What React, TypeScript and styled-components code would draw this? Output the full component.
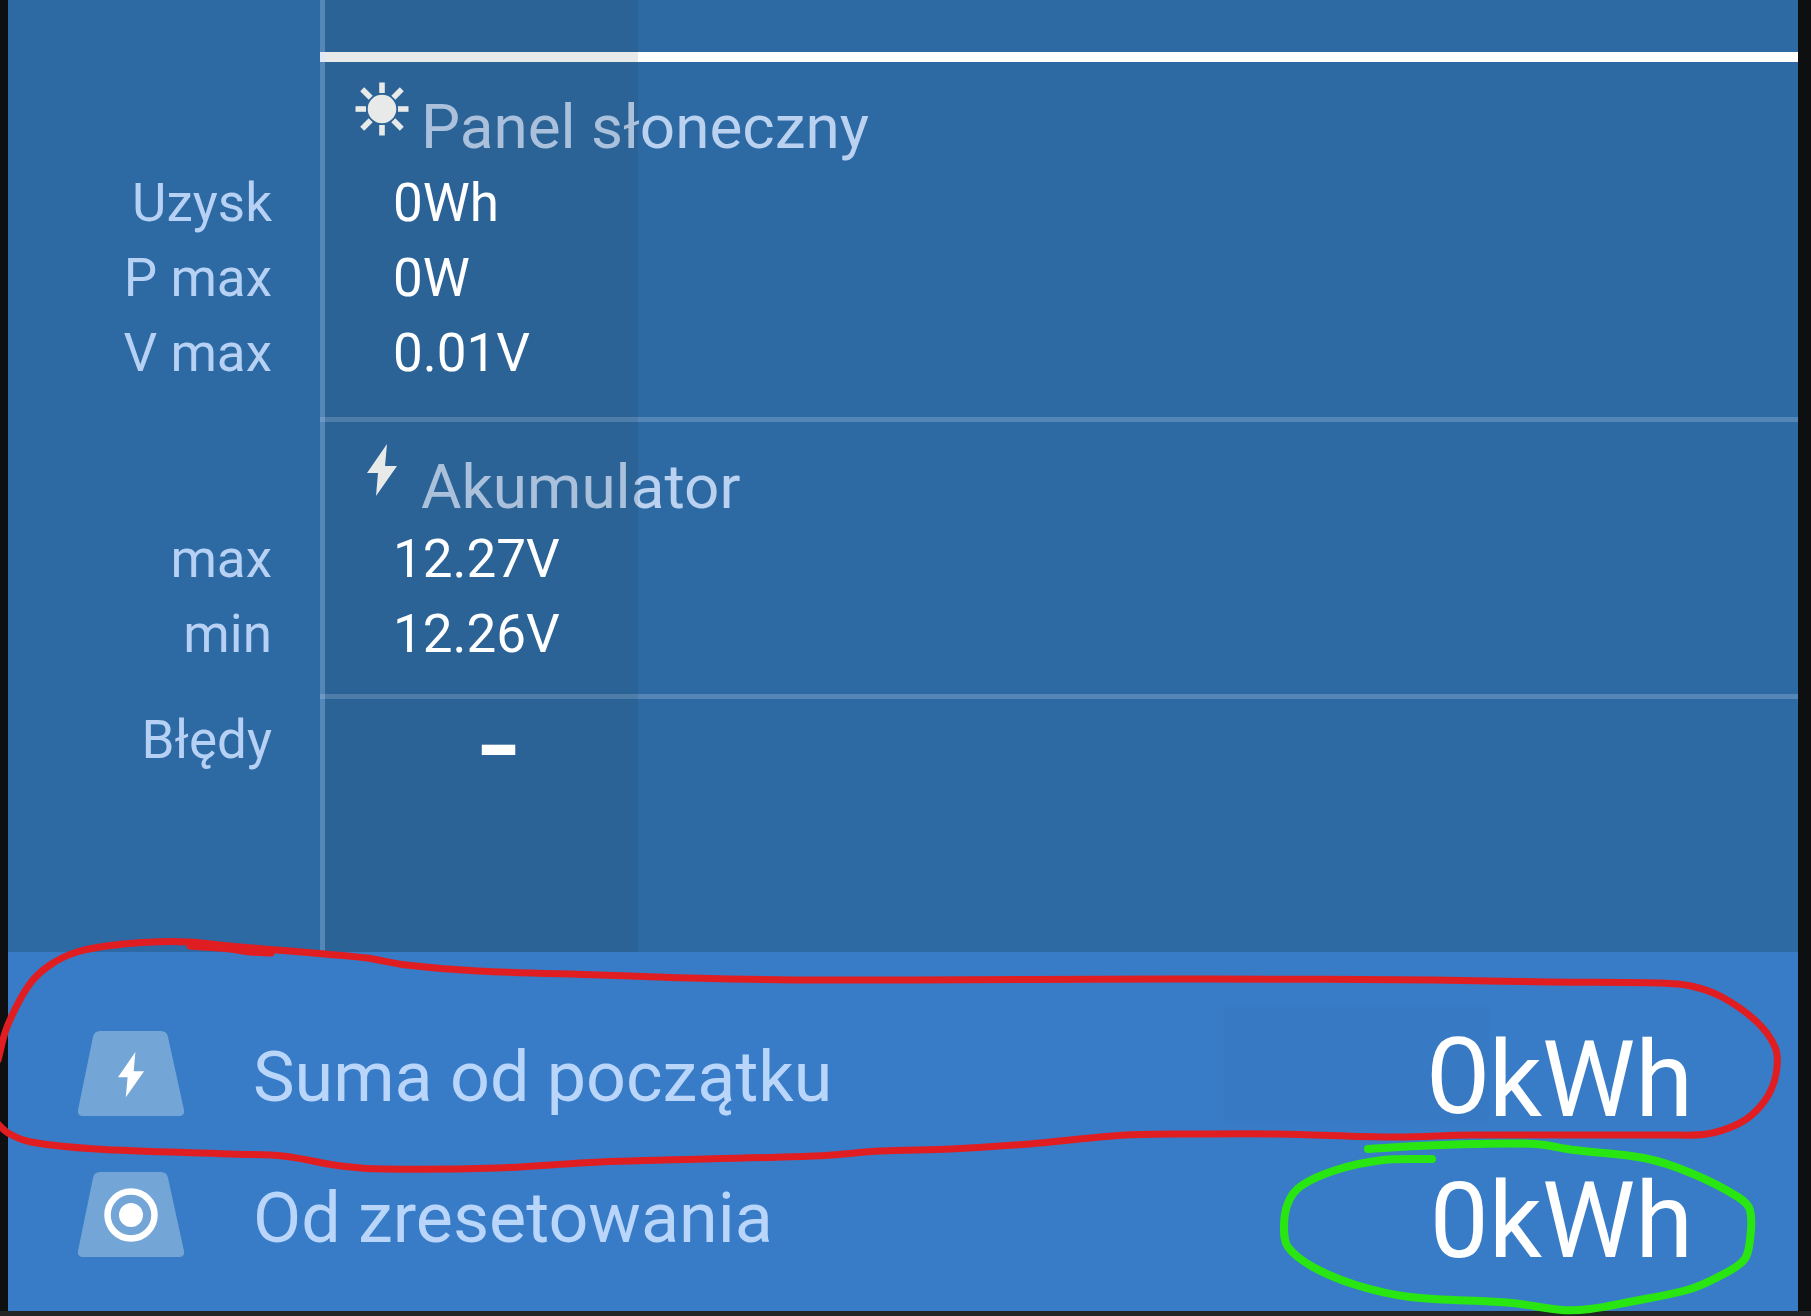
import React from "react";
import styled, { createGlobalStyle } from "styled-components";

const GlobalStyle = createGlobalStyle`
  * { box-sizing: border-box; }
  body { margin: 0; background: #0e0f10; }
`;

const LINE = "rgba(160, 190, 225, 0.34)";

const Page = styled.main`
  position: relative;
  display: flex;
  flex-direction: column;
  min-height: 100vh;
  padding: 0 13px 5px 8px;
  background: linear-gradient(to top, #222426 5px, #0e0f10 5px);
  font-family: Roboto, "Liberation Sans", sans-serif;
  color: #ffffff;
  overflow: hidden;
`;

const History = styled.section`
  position: relative;
  flex: 1;
  background: #2d69a3;
`;

const SelectedDay = styled.div`
  position: absolute;
  top: 0;
  bottom: 0;
  left: 312px;
  width: 318px;
  border-left: 5px solid ${LINE};
  background: rgba(28, 45, 40, 0.1);
  background-clip: padding-box;
`;

const Divider = styled.hr<{ $strong?: boolean }>`
  height: ${(p) => (p.$strong ? 10 : 5)}px;
  margin: 0 0 0 312px;
  border: 0;
  background: ${(p) => (p.$strong ? "#ffffff" : LINE)};
`;

const PreviousGroup = styled.div`
  height: 52px;
`;

const Group = styled.div<{ $bottom?: number }>`
  padding-bottom: ${(p) => p.$bottom ?? 0}px;
`;

const GroupTitle = styled.h2`
  display: flex;
  align-items: flex-start;
  height: 100px;
  margin: 0 0 0 312px;
  padding: 16px 0 0 30px;
  color: #bad1f0;
  font-size: 62px;
  font-weight: 400;
  line-height: 74px;

  svg {
    flex: none;
    width: 64px;
    height: 64px;
    margin-right: 7px;
  }

  span {
    padding-top: 12px;
  }
`;

const Readings = styled.dl<{ $top?: number }>`
  margin: 0;
  padding-top: ${(p) => p.$top ?? 0}px;
`;

const Reading = styled.div`
  display: grid;
  grid-template-columns: 312px 1fr;
  font-size: 53px;
  line-height: 75px;
`;

const Name = styled.dt`
  padding-right: 48px;
  text-align: right;
  color: #b6d1f4;
`;

const Amount = styled.dd`
  position: relative;
  z-index: 1;
  margin: 0;
  padding-left: 73px;
`;

const NoErrors = styled(Amount)`
  width: 318px;
  padding: 4px 0 0 39px;
  text-align: center;
  font-size: 140px;
`;

const Totals = styled.section`
  padding: 51px 105px 26px 70px;
  background: #387cc7;
`;

const Total = styled.div`
  display: grid;
  grid-template-columns: 106px 1fr auto;
  column-gap: 69px;
  align-items: center;
  height: 141px;
`;

const TotalName = styled.span`
  padding-top: 6px;
  color: #b9d6fa;
  font-size: 70px;
  line-height: 80px;
`;

const TotalAmount = styled.span`
  display: flex;
  align-items: center;
  height: 141px;
  font-size: 105px;
  line-height: 123px;
`;

const Digits = styled.span`
  padding-top: 14px;
`;

const EditedDigits = styled.span`
  align-self: flex-start;
  height: 116px;
  margin-top: 4px;
  padding: 20px 0 0 204px;
  background: #3779c2;
  font-family: "Liberation Sans", sans-serif;
  font-size: 110px;
  line-height: 96px;
`;

const Badge = styled.svg`
  display: block;
  width: 106px;
  height: 86px;
`;

const Marks = styled.svg`
  position: absolute;
  left: 0;
  bottom: 0;
  z-index: 2;
  width: 100%;
  pointer-events: none;
`;

const BOLT = "M20 0 L0 29 L11 29 L9 52 L30 22 L18 22 Z";

const SunIcon = () => (
  <svg viewBox="0 0 64 64" aria-hidden="true">
    <circle cx="32" cy="31" r="14.3" fill="#ffffff" />
    {[0, 45, 90, 135, 180, 225, 270, 315].map((angle) => (
      <rect
        key={angle}
        x="29.2"
        y={angle % 90 ? 3 : 4.5}
        width="5.6"
        height={angle % 90 ? 12 : 10.5}
        fill="#ffffff"
        transform={`rotate(${angle} 32 31)`}
      />
    ))}
  </svg>
);

const BoltIcon = () => (
  <svg viewBox="0 0 64 64" aria-hidden="true">
    <path d={BOLT} transform="translate(17 6)" fill="#ffffff" />
  </svg>
);

const TotalBadge = ({ children }: { children: React.ReactNode }) => (
  <Badge viewBox="0 0 106 86" aria-hidden="true">
    <path
      d="M22 0 H83 Q89 0 90 6 L106 79 Q107 85 100 85 H6 Q-1 85 0 79 L15 6 Q16 0 22 0 Z"
      fill="#73a5d6"
    />
    {children}
  </Badge>
);

type Point = [number, number];

/* Joins the points of a pen stroke with a smooth curve. */
function stroke(points: Point[]): string {
  let d = `M${points[0][0]} ${points[0][1]}`;
  for (let i = 0; i < points.length - 1; i++) {
    const a = points[Math.max(0, i - 1)];
    const b = points[i];
    const c = points[i + 1];
    const e = points[Math.min(points.length - 1, i + 2)];
    const reach = Math.hypot(c[0] - b[0], c[1] - b[1]) / 3;
    const t1 = Math.hypot(c[0] - a[0], c[1] - a[1]) || 1;
    const t2 = Math.hypot(e[0] - b[0], e[1] - b[1]) || 1;
    d += ` C${b[0] + ((c[0] - a[0]) / t1) * reach} ${b[1] + ((c[1] - a[1]) / t1) * reach}`;
    d += ` ${c[0] - ((e[0] - b[0]) / t2) * reach} ${c[1] - ((e[1] - b[1]) / t2) * reach}`;
    d += ` ${c[0]} ${c[1]}`;
  }
  return d;
}

const RED: Point[] = [
  [-2, 1060], [7, 1027], [29, 985], [50, 965], [77, 952], [115, 945], [153, 942], [188, 942],
  [230, 946], [276, 950], [325, 954], [367, 958], [406, 965], [478, 971], [600, 975], [690, 978],
  [795, 980], [912, 980], [1211, 979], [1434, 980], [1551, 982], [1660, 983], [1691, 986],
  [1722, 997], [1757, 1022], [1775, 1047], [1777, 1067], [1771, 1090], [1757, 1110], [1738, 1124],
  [1707, 1134], [1668, 1135], [1473, 1135], [1395, 1137], [1278, 1134], [1200, 1134], [1126, 1135],
  [1029, 1144], [951, 1149], [881, 1151], [814, 1156], [600, 1162], [497, 1168], [383, 1169],
  [341, 1166], [283, 1156], [230, 1154], [96, 1149], [31, 1142], [8, 1133], [-4, 1122],
];

const RED_TAIL: Point[] = [[190, 946], [230, 949], [250, 952], [271, 953]];

const GREEN: Point[] = [
  [1368, 1149], [1418, 1146], [1473, 1144], [1535, 1144], [1574, 1150], [1644, 1158], [1691, 1173],
  [1738, 1197], [1750, 1210], [1750, 1240], [1744, 1260], [1718, 1277], [1687, 1290], [1629, 1302],
  [1590, 1309], [1562, 1310], [1512, 1303], [1410, 1297], [1356, 1285], [1313, 1267], [1288, 1247],
  [1284, 1227], [1288, 1203], [1301, 1186], [1336, 1170], [1383, 1160], [1432, 1159],
];

export default function App() {
  return (
    <>
      <GlobalStyle />
      <Page>
        <History>
          <PreviousGroup />
          <Divider $strong />
          <Group $bottom={26}>
            <GroupTitle>
              <SunIcon />
              <span>Panel słoneczny</span>
            </GroupTitle>
            <Readings $top={4}>
              <Reading><Name>Uzysk</Name><Amount>0Wh</Amount></Reading>
              <Reading><Name>P max</Name><Amount>0W</Amount></Reading>
              <Reading><Name>V max</Name><Amount>0.01V</Amount></Reading>
            </Readings>
          </Group>
          <Divider />
          <Group $bottom={22}>
            <GroupTitle>
              <BoltIcon />
              <span>Akumulator</span>
            </GroupTitle>
            <Readings>
              <Reading><Name>max</Name><Amount>12.27V</Amount></Reading>
              <Reading><Name>min</Name><Amount>12.26V</Amount></Reading>
            </Readings>
          </Group>
          <Divider />
          <Readings $top={4}>
            <Reading><Name>Błędy</Name><NoErrors>-</NoErrors></Reading>
          </Readings>
          <SelectedDay />
        </History>
        <Totals>
          <Total>
            <TotalBadge>
              <path d={BOLT} transform="translate(40 21) scale(0.87)" fill="#ffffff" />
            </TotalBadge>
            <TotalName>Suma od początku</TotalName>
            <TotalAmount>
              <EditedDigits>0</EditedDigits>
              <Digits>kWh</Digits>
            </TotalAmount>
          </Total>
          <Total>
            <TotalBadge>
              <circle cx="53" cy="43" r="23.5" fill="none" stroke="#ffffff" strokeWidth="6.5" />
              <circle cx="53" cy="43" r="12" fill="#ffffff" />
            </TotalBadge>
            <TotalName>Od zresetowania</TotalName>
            <TotalAmount>
              <Digits>0kWh</Digits>
            </TotalAmount>
          </Total>
        </Totals>
        <Marks
          viewBox="0 900 1811 416"
          fill="none"
          strokeWidth="7"
          strokeLinecap="round"
          strokeLinejoin="round"
          aria-hidden="true"
        >
          <path d={stroke(RED)} stroke="#e01e22" />
          <path d={stroke(RED_TAIL)} stroke="#e01e22" />
          <path d={stroke(GREEN)} stroke="#29e612" strokeWidth="8" />
        </Marks>
      </Page>
    </>
  );
}
